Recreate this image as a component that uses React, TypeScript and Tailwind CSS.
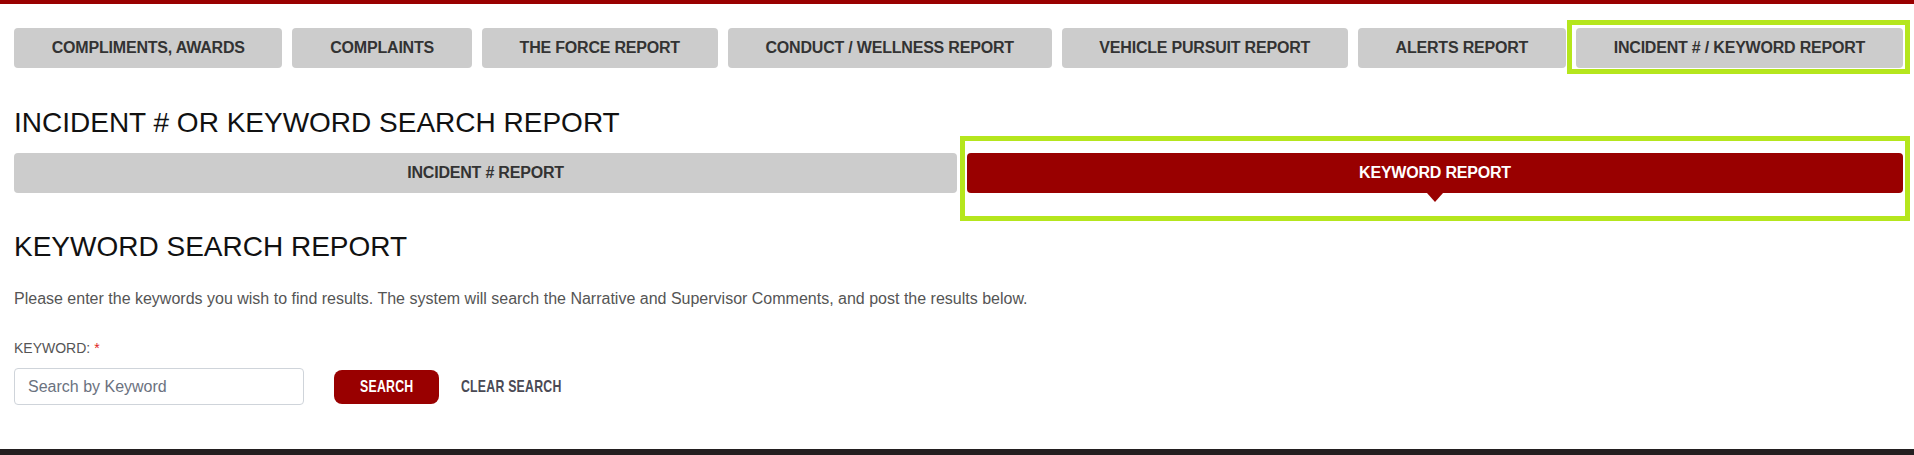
import { useState } from "react";

const topTabs = [
  "COMPLIMENTS, AWARDS",
  "COMPLAINTS",
  "THE FORCE REPORT",
  "CONDUCT / WELLNESS REPORT",
  "VEHICLE PURSUIT REPORT",
  "ALERTS REPORT",
  "INCIDENT # / KEYWORD REPORT",
];

export default function App() {
  const [activeTab] = useState("INCIDENT # / KEYWORD REPORT");
  const [subTab, setSubTab] = useState<"incident" | "keyword">("keyword");
  const [keyword, setKeyword] = useState("");

  return (
    <div className="min-h-[455px] flex flex-col bg-white font-['Liberation_Sans',Arial,sans-serif]">
      <div className="h-[4px] bg-[#990000]" />

      <div className="flex-1 pl-[14px] pr-[11px]">
        {/* Report nav */}
        <div className="mt-[24px] flex gap-[10px]">
          {topTabs.map((tab) => {
            const isActive = tab === activeTab;
            return (
              <div key={tab} className="relative flex-auto">
                <button className="w-full h-[40px] px-4 rounded-[4px] bg-[#cccccc] text-[16px] font-bold text-[#333333] whitespace-nowrap tracking-[-0.2px]">
                  {tab}
                </button>
                {isActive && (
                  <div className="pointer-events-none absolute -left-[9px] -right-[7px] -top-[8px] -bottom-[6px] border-[5px] border-[#b5e61d]" />
                )}
              </div>
            );
          })}
        </div>

        <h1 className="mt-[39px] text-[28px] leading-8 text-[#111111]">
          INCIDENT # OR KEYWORD SEARCH REPORT
        </h1>

        {/* Sub tabs */}
        <div className="mt-[14px] grid grid-cols-[943fr_936fr] gap-[10px]">
          <button
            onClick={() => setSubTab("incident")}
            className={`h-[40px] rounded-[4px] text-[16px] font-bold tracking-[-0.2px] ${
              subTab === "incident" ? "bg-[#990000] text-white" : "bg-[#cccccc] text-[#333333]"
            }`}
          >
            INCIDENT # REPORT
          </button>
          <div className="relative">
            <button
              onClick={() => setSubTab("keyword")}
              className={`relative w-full h-[40px] rounded-[4px] text-[16px] font-bold tracking-[-0.2px] ${
                subTab === "keyword" ? "bg-[#990000] text-white" : "bg-[#cccccc] text-[#333333]"
              }`}
            >
              KEYWORD REPORT
              {subTab === "keyword" && (
                <span className="absolute left-1/2 top-full -translate-x-1/2 w-0 h-0 border-x-[8px] border-x-transparent border-t-[9px] border-t-[#990000]" />
              )}
            </button>
            <div className="pointer-events-none absolute -left-[7px] -right-[7px] -top-[17px] -bottom-[28px] border-[5px] border-[#b5e61d]" />
          </div>
        </div>

        <h2 className="mt-[38px] text-[28px] leading-8 text-[#111111]">KEYWORD SEARCH REPORT</h2>

        <p className="mt-[24px] text-[16px] leading-6 text-[#555555]">
          Please enter the keywords you wish to find results. The system will search the Narrative and Supervisor
          Comments, and post the results below.
        </p>

        <label className="block mt-[27px] text-[14px] leading-5 text-[#555555]">
          KEYWORD: <span className="text-[#e02424]">*</span>
        </label>

        <div className="mt-[10px] flex items-center">
          <input
            value={keyword}
            onChange={(e) => setKeyword(e.target.value)}
            placeholder="Search by Keyword"
            className="w-[290px] h-[37px] px-[13px] rounded-[4px] border border-[#cfd4da] text-[16px] text-[#333] placeholder:text-[#6b7280] outline-none"
          />
          <button className="ml-[30px] w-[105px] h-[34px] rounded-[8px] bg-[#990000] text-white">
            <span className="inline-block scale-x-[0.725] text-[17px] font-bold tracking-[0.3px]">SEARCH</span>
          </button>
          <button onClick={() => setKeyword("")} className="ml-[22px] text-[#4a4a55]">
            <span className="inline-block origin-left scale-x-[0.725] text-[17px] font-bold tracking-[0.3px]">
              CLEAR SEARCH
            </span>
          </button>
        </div>
      </div>

      <div className="h-[6px] bg-[#231f20]" />
    </div>
  );
}
